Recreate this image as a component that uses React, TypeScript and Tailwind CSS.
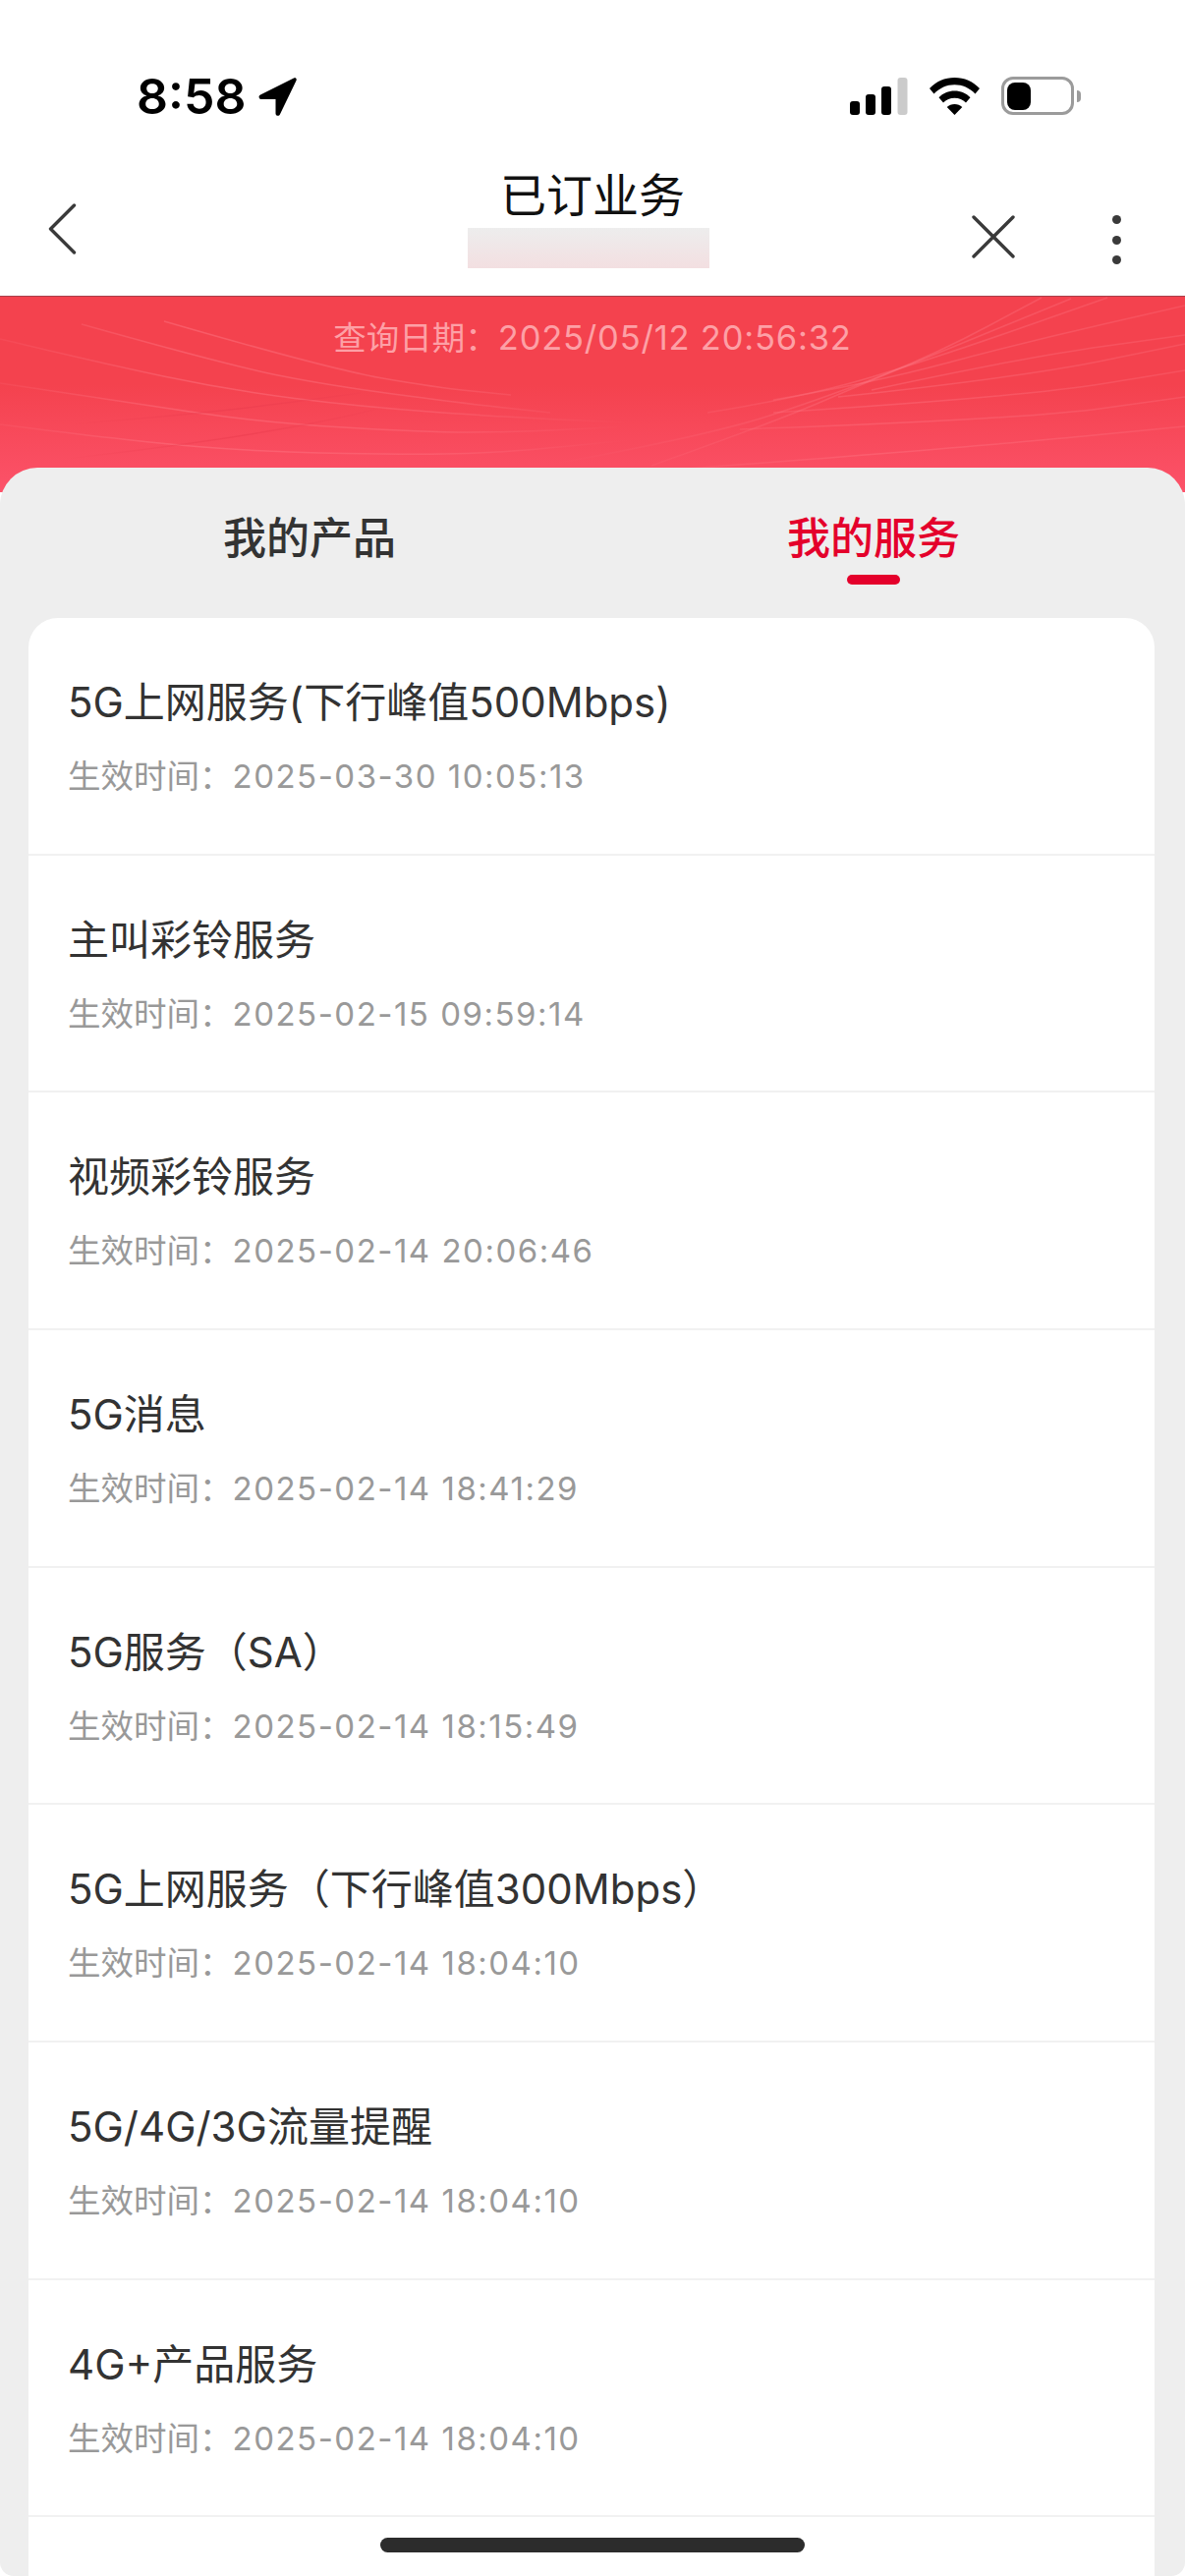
const font = "font-['Inter','Noto_Sans_CJK_SC',sans-serif]";

const services = [
  { name: '5G上网服务(下行峰值500Mbps)', time: '2025-03-30 10:05:13' },
  { name: '主叫彩铃服务', time: '2025-02-15 09:59:14' },
  { name: '视频彩铃服务', time: '2025-02-14 20:06:46' },
  { name: '5G消息', time: '2025-02-14 18:41:29' },
  { name: '5G服务（SA）', time: '2025-02-14 18:15:49' },
  { name: '5G上网服务（下行峰值300Mbps）', time: '2025-02-14 18:04:10' },
  { name: '5G/4G/3G流量提醒', time: '2025-02-14 18:04:10' },
  { name: '4G+产品服务', time: '2025-02-14 18:04:10' },
];

// decorative curves of the red banner, page coordinates minus the banner top (301)
const leftLines: number[][][] = [
  [[0, 43], [100, 67], [233, 95], [367, 112], [520, 123], [640, 128]],
  [[0, 88], [133, 108], [267, 128], [433, 138], [520, 138], [640, 132]],
  [[0, 130], [133, 147], [267, 158], [433, 161], [520, 158], [640, 146]],
  [[83, 28], [233, 70], [333, 90], [467, 108], [560, 118]],
  [[167, 25], [333, 73], [440, 92], [520, 100]],
];

const rightLines: number[][][] = [
  [[553, 172], [720, 142], [853, 98], [953, 58], [1060, 1]],
  [[663, 172], [787, 128], [887, 85], [953, 58], [1090, 2]],
  [[720, 118], [820, 102], [953, 62], [1127, 1]],
  [[787, 105], [887, 88], [1040, 47], [1206, 9]],
  [[887, 95], [1040, 62], [1206, 39]],
  [[853, 102], [1040, 82], [1206, 48]],
  [[787, 118], [1040, 102], [1206, 75]],
  [[753, 135], [1040, 125], [1206, 102]],
  [[700, 175], [1000, 152], [1206, 132]],
];

const darkLines: number[][][] = [
  [[67, 130], [200, 120], [367, 98]],
  [[67, 165], [183, 152], [333, 127], [420, 105]],
];

const smooth = (pts: number[][]) => {
  let d = `M${pts[0][0]} ${pts[0][1]}`;
  for (let i = 1; i < pts.length - 1; i++) {
    const mx = (pts[i][0] + pts[i + 1][0]) / 2;
    const my = (pts[i][1] + pts[i + 1][1]) / 2;
    d += ` Q${pts[i][0]} ${pts[i][1]} ${mx} ${my}`;
  }
  const last = pts[pts.length - 1];
  return `${d} L${last[0]} ${last[1]}`;
};

const StatusBar = () => (
  <div className="flex h-[165px] items-start justify-between pl-[139px] pr-[106px] pt-[78px]">
    <div className="flex items-center gap-[12px]">
      <span className="text-[50px] font-semibold leading-[40px] text-black">8:58</span>
      <svg width="40" height="40" viewBox="0 0 40 40">
        <path
          d="M37 1.5 3 18.5c-2.4 1.2-1.6 4.5 1 4.5h14.5v14.500c0 2.600 3.500 3.200 4.500 .8L39.500 4c.8-2-.6-3.300-2.500-2.500Z"
          fill="#000"
        />
      </svg>
    </div>
    <div className="flex items-center">
      <svg width="59" height="38" viewBox="0 0 59 38">
        <rect x="0" y="24" width="10" height="14" rx="3" fill="#000" />
        <rect x="16" y="17" width="10" height="21" rx="3" fill="#000" />
        <rect x="32" y="9" width="10" height="29" rx="3" fill="#000" />
        <rect x="48.500" y="0" width="10" height="38" rx="3" fill="#cbcbcb" />
      </svg>
      <svg className="ml-[22px]" width="51" height="38" viewBox="0 0 51 38">
        <path
          d="M25.500 0C15.500 0 7 3.800 0 11l4.500 5.500C10.500 10.500 17.500 7.300 25.500 7.300s15 3.200 21 9.200L51 11C44 3.800 35.500 0 25.500 0Z"
          fill="#000"
        />
        <path
          d="M25.500 13.500c-6.300 0-11.800 2.400-16 6.700l4.500 5.300c3-3 7-4.800 11.500-4.800s8.500 1.800 11.500 4.800l4.500-5.300c-4.200-4.300-9.700-6.700-16-6.700Z"
          fill="#000"
        />
        <path d="M25.500 27c-3 0-5.700 1.100-7.800 3l7.800 8 7.800-8c-2.100-1.900-4.800-3-7.800-3Z" fill="#000" />
      </svg>
      <div className="ml-[22px] flex items-center">
        <div className="flex h-[39px] w-[74px] items-center rounded-[12px] border-[3px] border-[#9b9b9b] pl-[3px]">
          <div className="h-[28px] w-[24px] rounded-[8px] bg-black" />
        </div>
        <div className="ml-[3px] h-[12px] w-[4px] rounded-r-full bg-[#9b9b9b]" />
      </div>
    </div>
  </div>
);

const Header = () => (
  <div className="flex h-[136px]">
    <div className="w-[480px] pl-[49px] pt-[42px]">
      <svg width="29" height="52" viewBox="0 0 29 52" fill="none">
        <path d="M26.500 2 2.500 26l24 24" stroke="#3a3a3a" strokeWidth="3.400" strokeLinecap="round" strokeLinejoin="round" />
      </svg>
    </div>
    <div className="flex w-[246px] flex-col items-center pt-[6px]">
      <div className="text-[47px] leading-[56px] text-[#111]">已订业务</div>
      <div className="mr-[8px] mt-[5px] h-[41px] w-[246px] shrink-0 bg-gradient-to-b from-[#ededed] to-[#f3dfe1] blur-[0.5px]" />
    </div>
    <div className="flex w-[480px] justify-end gap-[99px] pr-[65px] pt-[54px]">
      <svg width="44" height="44" viewBox="0 0 44 44" fill="none">
        <path d="M2 2l40 40M42 2 2 42" stroke="#3a3a3a" strokeWidth="3.400" strokeLinecap="round" />
      </svg>
      <div className="flex h-[50px] w-[9px] flex-col justify-between">
        <div className="h-[9px] w-[9px] rounded-full bg-[#3a3a3a]" />
        <div className="h-[9px] w-[9px] rounded-full bg-[#3a3a3a]" />
        <div className="h-[9px] w-[9px] rounded-full bg-[#3a3a3a]" />
      </div>
    </div>
  </div>
);

const Banner = () => (
  <div className="relative h-[200px] border-t border-[#a8404a] bg-gradient-to-b from-[#f4424e] from-45% to-[#fc5269]">
    <svg className="absolute inset-0" width="1206" height="200" viewBox="0 0 1206 200" fill="none">
      <defs>
        <linearGradient id="fadeLeft" gradientUnits="userSpaceOnUse" x1="0" y1="0" x2="640" y2="0">
          <stop offset="0" stopColor="#ff7d8a" stopOpacity="0.12" />
          <stop offset="0.3" stopColor="#ff7d8a" stopOpacity="0.42" />
          <stop offset="0.7" stopColor="#ff7d8a" stopOpacity="0.32" />
          <stop offset="1" stopColor="#ff7d8a" stopOpacity="0" />
        </linearGradient>
        <linearGradient id="fadeRight" gradientUnits="userSpaceOnUse" x1="560" y1="0" x2="1206" y2="0">
          <stop offset="0" stopColor="#ff7d8a" stopOpacity="0" />
          <stop offset="0.5" stopColor="#ff7d8a" stopOpacity="0.35" />
          <stop offset="1" stopColor="#ff7d8a" stopOpacity="0.25" />
        </linearGradient>
        <linearGradient id="fadeDark" gradientUnits="userSpaceOnUse" x1="67" y1="0" x2="420" y2="0">
          <stop offset="0" stopColor="#e93a4c" stopOpacity="0" />
          <stop offset="0.5" stopColor="#e93a4c" stopOpacity="0.5" />
          <stop offset="1" stopColor="#e93a4c" stopOpacity="0" />
        </linearGradient>
      </defs>
      {leftLines.map((pts, i) => (
        <path key={i} d={smooth(pts)} stroke="url(#fadeLeft)" strokeWidth="1.500" />
      ))}
      {rightLines.map((pts, i) => (
        <path key={i} d={smooth(pts)} stroke="url(#fadeRight)" strokeWidth="1.500" />
      ))}
      {darkLines.map((pts, i) => (
        <path key={i} d={smooth(pts)} stroke="url(#fadeDark)" strokeWidth="1.500" />
      ))}
    </svg>
    <div className="relative pt-[19px] text-center leading-[46px] text-[#fda0a6]">
      <span className="text-[33.500px]">查询日期：</span>
      <span className="text-[34.500px] tracking-[0.8px]">2025/05/12 20:56:32</span>
    </div>
  </div>
);

const Tabs = () => (
  <div className="flex h-[153px] pt-[44px]">
    <div className="flex w-[630px] justify-center text-[44px] font-medium leading-[56px] text-[#333]">我的产品</div>
    <div className="flex w-[518px] flex-col items-center">
      <div className="text-[44px] font-medium leading-[56px] text-[#e4002b]">我的服务</div>
      <div className="mt-[9px] h-[10px] w-[54px] rounded-full bg-[#e4002b]" />
    </div>
  </div>
);

const ServiceRow = ({ name, time }: { name: string; time: string }) => (
  <div className="h-[241.66px] border-b-2 border-[#f1f1f1] pl-[40px] pt-[58px]">
    <div className="text-[42px] leading-[56px] text-[#333]">{name}</div>
    <div className="mt-[25px] leading-[44px] text-[#999]">
      <span className="text-[33.500px]">生效时间：</span>
      <span className="text-[33px] tracking-[1.5px]">{time}</span>
    </div>
  </div>
);

export default function App() {
  return (
    <div className={`relative flex h-[2622px] w-[1206px] flex-col overflow-hidden bg-white ${font}`}>
      <StatusBar />
      <Header />
      <Banner />
      <div className="relative -mt-[25px] flex-1 overflow-hidden rounded-t-[38px] rounded-b-[14px] bg-[#eeeeee] pl-[29px] pr-[31px]">
        <div className="-ml-[29px] -mr-[31px]">
          <Tabs />
        </div>
        <div className="h-[2000px] rounded-t-[30px] bg-white">
          {services.map((s) => (
            <ServiceRow key={s.name} name={s.name} time={s.time} />
          ))}
        </div>
      </div>
      <div className="absolute bottom-[24px] left-[387px] h-[15px] w-[432px] rounded-full bg-[#2c2c2c]" />
    </div>
  );
}
